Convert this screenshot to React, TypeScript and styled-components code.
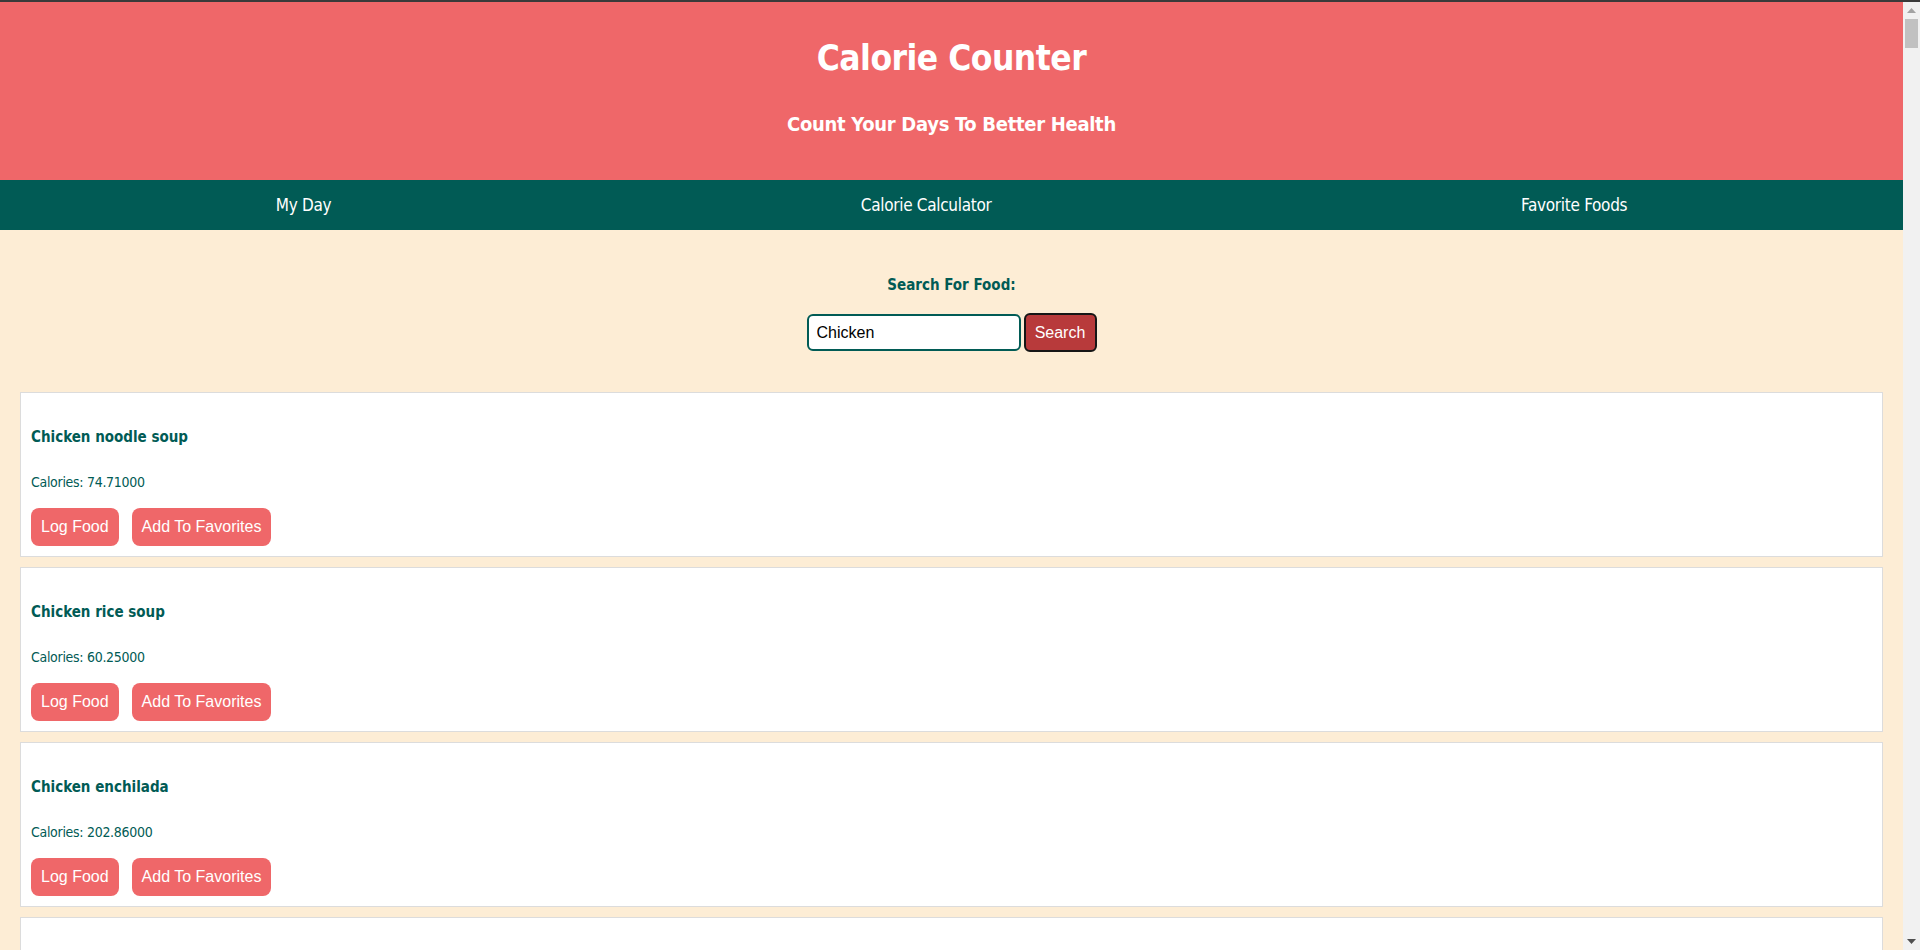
import React, { useState } from 'react';
import styled, { createGlobalStyle } from 'styled-components';

const colors = {
    pink: '#ef6769',
    teal: '#015b55',
    cream: '#fdedd5',
    brick: '#b83a3b',
    cardBorder: '#dcdcdc',
};

const narrow = `"Liberation Sans Narrow", "DejaVu Sans Condensed", "Liberation Sans", sans-serif`;

const GlobalStyle = createGlobalStyle`
    html, body {
        margin: 0;
        padding: 0;
        background: ${colors.cream};
        font-family: ${narrow};
        overflow: hidden;
    }
    * {
        box-sizing: border-box;
    }
`;

const Shell = styled.div`
    height: 100vh;
    border-top: 2px solid #3a3a3a;
    display: flex;
    background: ${colors.cream};
`;

const Page = styled.main`
    flex: 1;
    min-width: 0;
    overflow-y: auto;
    scrollbar-width: none;
`;

const ScrollTrack = styled.div`
    width: 17px;
    flex-shrink: 0;
    background: #f1f1f1;
    display: flex;
    flex-direction: column;
    align-items: center;
`;

const ScrollArrow = styled.div`
    height: 17px;
    width: 17px;
    display: flex;
    align-items: center;
    justify-content: center;
`;

const ScrollThumb = styled.div`
    width: 13px;
    height: 29px;
    background: #c1c1c1;
`;

const ScrollSpace = styled.div`
    flex: 1;
`;

const Header = styled.header`
    background: ${colors.pink};
    padding: 30px 0 41px;
    text-align: center;
    color: #fff;
`;

const Title = styled.h1`
    margin: 0;
    font-size: 35px;
    line-height: 52px;
    letter-spacing: -0.5px;
    font-weight: 700;
`;

const Subtitle = styled.h2`
    margin: 25px 0 0;
    font-size: 20px;
    line-height: 30px;
    letter-spacing: -0.3px;
    font-weight: 700;
`;

const Nav = styled.nav`
    background: ${colors.teal};
    height: 50px;
    display: flex;
    justify-content: space-around;
    align-items: center;
    padding: 0 11px;
`;

const NavLink = styled.a`
    color: #fff;
    font-size: 17px;
    line-height: 50px;
    letter-spacing: -0.3px;
    text-decoration: none;
    cursor: pointer;
`;

const SearchSection = styled.section`
    padding: 41px 0 40px;
    text-align: center;
`;

const SectionTitle = styled.h3`
    margin: 0 0 14px;
    font-size: 15px;
    line-height: 28px;
    font-weight: 700;
    color: ${colors.teal};
`;

const SearchForm = styled.form`
    display: flex;
    justify-content: center;
    align-items: center;
    gap: 3px;
`;

const SearchInput = styled.input`
    width: 214px;
    height: 37px;
    padding: 0 8px;
    border: 2px solid ${colors.teal};
    border-radius: 6px;
    font-family: "Liberation Sans", Arial, sans-serif;
    font-size: 16px;
    color: #000;
    background: #fff;
    outline: none;
`;

const SearchButton = styled.button`
    height: 39px;
    width: 73px;
    border: 2px solid #161616;
    border-radius: 6px;
    background: ${colors.brick};
    color: #fff;
    font-family: "Liberation Sans", Arial, sans-serif;
    font-size: 16px;
    cursor: pointer;
`;

const Results = styled.div`
    display: flex;
    flex-direction: column;
    gap: 10px;
    padding: 0 20px 20px;
`;

const Card = styled.div`
    background: #fff;
    border: 1px solid ${colors.cardBorder};
    padding: 10px;
`;

const FoodName = styled.h3`
    margin: 20px 0 19px;
    font-size: 15px;
    line-height: 28px;
    font-weight: 700;
    color: ${colors.teal};
`;

const Calories = styled.p`
    margin: 0 0 14px;
    font-size: 14px;
    line-height: 24px;
    letter-spacing: -0.3px;
    color: ${colors.teal};
`;

const Actions = styled.div`
    display: flex;
    gap: 13px;
`;

const ActionButton = styled.button`
    background: ${colors.pink};
    color: #fff;
    border: none;
    border-radius: 8px;
    padding: 10px;
    height: 38px;
    font-family: "Liberation Sans", Arial, sans-serif;
    font-size: 16px;
    line-height: 18px;
    cursor: pointer;
`;

const foods = [
    { name: 'Chicken noodle soup', calories: '74.71000' },
    { name: 'Chicken rice soup', calories: '60.25000' },
    { name: 'Chicken enchilada', calories: '202.86000' },
    { name: 'Chicken salad', calories: '230.94000' },
    { name: 'Chicken pot pie', calories: '432.50000' },
];

const App = () => {
    const [query, setQuery] = useState('Chicken');

    return (
        <Shell>
            <GlobalStyle />
            <Page>
                <Header>
                    <Title>Calorie Counter</Title>
                    <Subtitle>Count Your Days To Better Health</Subtitle>
                </Header>
                <Nav>
                    <NavLink>My Day</NavLink>
                    <NavLink>Calorie Calculator</NavLink>
                    <NavLink>Favorite Foods</NavLink>
                </Nav>
                <SearchSection>
                    <SectionTitle>Search For Food:</SectionTitle>
                    <SearchForm onSubmit={(e) => e.preventDefault()}>
                        <SearchInput value={query} onChange={(e) => setQuery(e.target.value)} />
                        <SearchButton type="submit">Search</SearchButton>
                    </SearchForm>
                </SearchSection>
                <Results>
                    {foods.map((food) => (
                        <Card key={food.name}>
                            <FoodName>{food.name}</FoodName>
                            <Calories>Calories: {food.calories}</Calories>
                            <Actions>
                                <ActionButton>Log Food</ActionButton>
                                <ActionButton>Add To Favorites</ActionButton>
                            </Actions>
                        </Card>
                    ))}
                </Results>
            </Page>
            <ScrollTrack>
                <ScrollArrow>
                    <svg width="9" height="5" viewBox="0 0 9 5">
                        <path d="M0 5h9L4.5 0z" fill="#a3a3a3" />
                    </svg>
                </ScrollArrow>
                <ScrollThumb />
                <ScrollSpace />
                <ScrollArrow>
                    <svg width="9" height="5" viewBox="0 0 9 5">
                        <path d="M0 0h9L4.5 5z" fill="#505050" />
                    </svg>
                </ScrollArrow>
            </ScrollTrack>
        </Shell>
    );
};

export default App;
